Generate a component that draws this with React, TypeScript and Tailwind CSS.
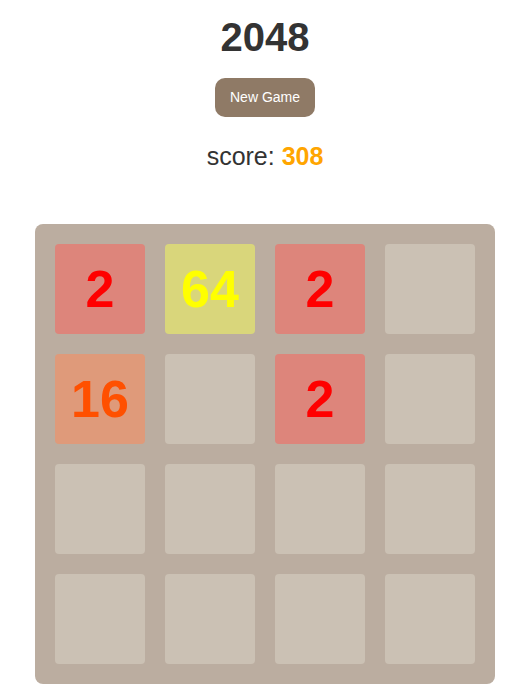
import React from "react";

const grid: (number | null)[][] = [
  [2, 64, 2, null],
  [16, null, 2, null],
  [null, null, null, null],
  [null, null, null, null],
];

function Tile({ v }: { v: number | null }) {
  if (v === null) {
    return <div className="w-[90px] h-[90px] rounded-[4px] bg-[#cbc1b4]" />;
  }
  if (v === 2) {
    return (
      <div className="w-[90px] h-[90px] rounded-[4px] bg-[#dd857b] flex items-center justify-center text-[52px] font-bold text-[#ff0000] leading-none">
        2
      </div>
    );
  }
  if (v === 64) {
    return (
      <div className="w-[90px] h-[90px] rounded-[4px] bg-[#d9d67b] flex items-center justify-center text-[52px] font-bold text-[#ffff00] leading-none">
        64
      </div>
    );
  }
  return (
    <div className="w-[90px] h-[90px] rounded-[4px] bg-[#df9a7a] flex items-center justify-center text-[52px] font-bold text-[#ff5000] leading-none">
      16
    </div>
  );
}

export default function App() {
  return (
    <div className="w-[531px] min-h-[696px] bg-white">
      <div
        className="w-[530px] flex flex-col items-center pt-[17px]"
        style={{ fontFamily: '"Liberation Sans", Arial, sans-serif' }}
      >
        <h1 className="h-[40px] leading-[40px] text-[40px] font-bold text-[#333333]">2048</h1>
        <button className="mt-[21px] w-[100px] h-[39px] rounded-[10px] bg-[#8f7a66] text-white text-[14px]">
          New Game
        </button>
        <div className="mt-[27px] h-[24px] leading-[24px] text-[25px] text-[#333333]">
          score: <span className="font-bold text-[#ffa500]">308</span>
        </div>
        <div className="mt-[56px] w-[460px] h-[460px] rounded-[8px] bg-[#bbada0] p-[20px] grid grid-cols-4 gap-[20px]">
          {grid.flat().map((v, i) => (
            <Tile key={i} v={v} />
          ))}
        </div>
      </div>
    </div>
  );
}
